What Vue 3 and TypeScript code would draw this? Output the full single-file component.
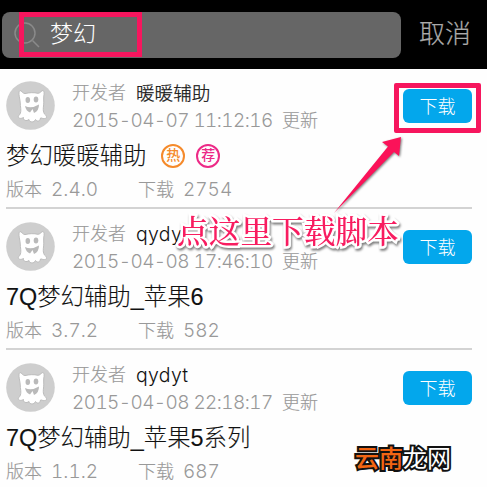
<script setup lang="ts">
interface Script {
  developer: string
  updated: string
  title: string
  version: string
  downloads: number
  tags: { label: string; kind: string }[]
}

const query = '梦幻'
const isLatin = (text: string): boolean => /^[\w\s]+$/.test(text)
const scripts: Script[] = [
  {
    developer: '暖暖辅助',
    updated: '2015-04-07 11:12:16',
    title: '梦幻暖暖辅助',
    version: '2.4.0',
    downloads: 2754,
    tags: [
      { label: '热', kind: 'hot' },
      { label: '荐', kind: 'pick' },
    ],
  },
  { developer: 'qydyt', updated: '2015-04-08 17:46:10', title: '7Q梦幻辅助_苹果6', version: '3.7.2', downloads: 582, tags: [] },
  { developer: 'qydyt', updated: '2015-04-08 22:18:17', title: '7Q梦幻辅助_苹果5系列', version: '1.1.2', downloads: 687, tags: [] },
]
</script>

<template>
  <div class="screen">
    <header class="bar">
      <div class="search">
        <svg class="lens" viewBox="0 0 26 26" width="26" height="26">
          <circle cx="11" cy="11" r="10" />
          <path d="M18.5 18.5 L25 25" />
        </svg>
        <span class="query">{{ query }}</span>
      </div>
      <span class="cancel">取消</span>
    </header>

    <main>
      <article v-for="(s, i) in scripts" :key="i" class="item">
        <div class="top">
          <svg class="avatar" viewBox="0 0 49 49" width="49" height="49">
            <circle class="disc" cx="24.5" cy="24.5" r="24.3" />
            <path class="ghost" d="M14 9.500 C15.500 9.500 16.500 12.300 19 12.600 C23 11.500 28 11.300 32 12.300 C34.500 12.300 35.500 9 37.300 9.500 C39.300 11 37.200 15 37.700 19 C38.200 25 36 29 38.500 33 C41 35 41.500 37.500 38.500 37.500 C36.500 38 35.500 36.500 34.500 37 C34 40.500 31.500 41 29.500 38.500 C28 42 23.500 41.500 23 38.500 C20.500 40.500 17 39.500 17.500 36.500 C14.500 38.500 11 37 12.800 34.500 C16 31.500 14.500 27 14.300 23 C14.300 18 11.500 11.500 14 9.500 Z" />
            <ellipse class="face" cx="21.800" cy="19" rx="2.300" ry="3" />
            <ellipse class="face" cx="30" cy="18.500" rx="2.300" ry="3" />
            <path class="face" d="M19 25 Q25.500 28 33 23.500 Q33 30 28 32 L26.500 28 L24 31.500 Q20 30 19 25 Z" />
          </svg>
          <div class="info">
            <div class="line">
              <span class="label">开发者</span>
              <span class="dev" :class="{ latin: isLatin(s.developer) }">{{ s.developer }}</span>
            </div>
            <div class="line">
              <span class="num date">{{ s.updated }}</span>
              <span class="label">更新</span>
            </div>
          </div>
          <button class="download">下载</button>
        </div>
        <div class="title">
          <span>{{ s.title }}</span>
          <span v-for="t in s.tags" :key="t.kind" class="tag" :class="t.kind">{{ t.label }}</span>
        </div>
        <div class="meta">
          <span class="label">版本</span>
          <span class="num version">{{ s.version }}</span>
          <span class="label">下载</span>
          <span class="num">{{ s.downloads }}</span>
        </div>
      </article>
    </main>

    <div class="mark mark-search"></div>
    <div class="mark mark-download"></div>
    <svg class="arrow" viewBox="0 0 76 86" width="76" height="86">
      <path d="M71 3 L52 8 L58 12.500 L4 79 L64 18 L69 22 Z" />
    </svg>
    <div class="note">点这里下载脚本</div>
    <div class="brand"><span class="orange">云南</span>龙网</div>
  </div>
</template>

<style>
body {
  margin: 0;
  background: #fff;
}
</style>

<style scoped>
.screen {
  position: relative;
  width: 487px;
  height: 487px;
  overflow: hidden;
  background: #fefefe;
  font-family: 'Liberation Sans', 'Noto Sans CJK SC', sans-serif;
  font-weight: 300;
  color: #111;
  white-space: nowrap;
}
.bar {
  box-sizing: border-box;
  height: 69px;
  padding: 12px 0 0 2px;
  display: flex;
  gap: 18px;
  background: #000;
}
.search {
  box-sizing: border-box;
  width: 399px;
  height: 46px;
  padding-left: 12px;
  display: flex;
  align-items: center;
  gap: 10px;
  border-radius: 8px;
  background: #666;
}
.lens {
  fill: none;
  stroke: #8a8a8a;
  stroke-width: 1.5;
}
.query {
  color: #fff;
  font-size: 23px;
  line-height: 45px;
  height: 46px;
}
.cancel {
  color: #aaa;
  font-size: 26px;
  line-height: 44px;
  -webkit-text-stroke: 0.2px currentColor;
}
.item {
  box-sizing: border-box;
  height: 141px;
  width: 466px;
  margin-left: 6px;
  padding-top: 11px;
  border-bottom: 2px solid #d3d3d3;
}
.item:first-child {
  height: 140px;
  padding-top: 10px;
}
.item:last-child {
  border-bottom: none;
}
.top {
  display: flex;
  height: 56px;
}
.avatar {
  margin-top: 2px;
}
.disc {
  fill: #cecece;
}
.ghost {
  fill: #fff;
  stroke: #bdbdbd;
  stroke-width: 1;
}
.face {
  fill: #bababa;
}
.info {
  flex: 1;
  margin-left: 17px;
}
.line {
  display: flex;
  align-items: center;
  height: 28px;
}
.label {
  color: #999;
  font-size: 18px;
  line-height: 28px;
  -webkit-text-stroke: 0.15px currentColor;
}
.dev {
  margin-left: 10px;
  font-size: 18.5px;
  line-height: 28px;
  font-family: Inter, 'Noto Sans CJK SC', sans-serif;
  letter-spacing: 0.1px;
  -webkit-text-stroke: 0.25px currentColor;
}
.dev.latin {
  font-size: 19.5px;
  letter-spacing: 0.3px;
  -webkit-text-stroke: 0;
}
.num {
  color: #999;
  font-family: Inter, 'Liberation Sans', sans-serif;
  font-size: 19px;
  font-variant-numeric: tabular-nums;
  line-height: 28px;
}
.date {
  width: 210px;
  letter-spacing: -0.6px;
}
.download {
  width: 69px;
  height: 34px;
  margin-top: 10px;
  padding: 1px 0 0;
  border: 0;
  border-radius: 6px;
  background: #03a7ec;
  color: #fff;
  font: inherit;
  font-size: 18px;
  line-height: 34px;
}
.title {
  display: flex;
  align-items: center;
  height: 42px;
  font-size: 23.4px;
  line-height: 42px;
  -webkit-text-stroke: 0.12px currentColor;
}
.tag {
  box-sizing: border-box;
  width: 24px;
  height: 24px;
  margin-left: 11px;
  border: 2px solid;
  border-radius: 50%;
  text-align: center;
  font-size: 14px;
  font-weight: 500;
  line-height: 19px;
  -webkit-text-stroke: 0;
}
.tag:nth-child(2) {
  margin-left: 15px;
}
.hot {
  color: #f58a2b;
}
.pick {
  color: #ed2a87;
}
.meta {
  display: flex;
  align-items: center;
  height: 26px;
}
.meta .num {
  margin-left: 9px;
}
.version {
  width: 87px;
}
.mark {
  position: absolute;
  box-sizing: border-box;
  border: 5px solid #f6165e;
}
.mark-search {
  left: 19px;
  top: 12px;
  width: 123px;
  height: 45px;
}
.mark-download {
  left: 394px;
  top: 83px;
  width: 87px;
  height: 50px;
  border-radius: 2px;
}
.arrow {
  position: absolute;
  left: 330px;
  top: 134px;
  fill: #fb1259;
  filter: drop-shadow(1px 1px 1px rgba(0, 0, 0, 0.5));
}
.note {
  position: absolute;
  left: 177px;
  top: 208px;
  font-family: 'Noto Serif CJK SC', 'Noto Sans CJK SC', serif;
  font-size: 31.7px;
  font-weight: 500;
  line-height: 44px;
  color: #f81c60;
  -webkit-text-stroke: 5px #fff;
  paint-order: stroke fill;
  filter: drop-shadow(1px 2px 1px rgba(0, 0, 0, 0.5));
}
.brand {
  position: absolute;
  left: 355px;
  top: 441px;
  font-size: 24px;
  font-weight: 400;
  line-height: 36px;
  color: #fff;
  -webkit-text-stroke: 4px #111;
  paint-order: stroke fill;
}
.orange {
  color: #f26513;
  font-weight: 500;
}
</style>
